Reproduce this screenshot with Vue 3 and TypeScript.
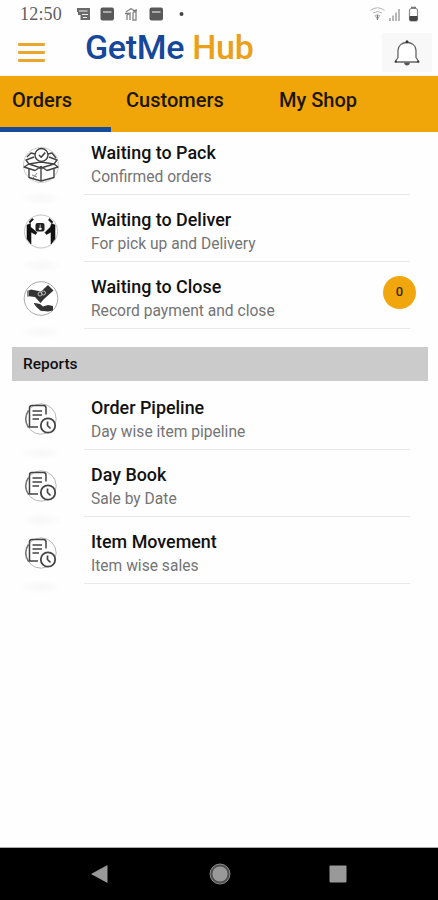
<script setup lang="ts">
import { ref } from 'vue'

interface MenuItem {
  title: string
  subtitle: string
  icon: 'pack' | 'deliver' | 'close' | 'report'
  badge?: number
}

const tabs = ['Orders', 'Customers', 'My Shop']
const activeTab = ref('Orders')

const sections: { id: string; heading?: string; items: MenuItem[] }[] = [
  {
    id: 'orders',
    items: [
      { title: 'Waiting to Pack', subtitle: 'Confirmed orders', icon: 'pack' },
      { title: 'Waiting to Deliver', subtitle: 'For pick up and Delivery', icon: 'deliver' },
      { title: 'Waiting to Close', subtitle: 'Record payment and close', icon: 'close', badge: 0 },
    ],
  },
  {
    id: 'reports',
    heading: 'Reports',
    items: [
      { title: 'Order Pipeline', subtitle: 'Day wise item pipeline', icon: 'report' },
      { title: 'Day Book', subtitle: 'Sale by Date', icon: 'report' },
      { title: 'Item Movement', subtitle: 'Item wise sales', icon: 'report' },
    ],
  },
]
</script>

<template>
  <div class="screen">
    <div class="status">
      <span class="time">12:50</span>
      <svg class="notices" width="112" height="16" viewBox="0 0 112 16">
        <path d="M1 2h13v12H4.500V9H2V6H1z" fill="#6a6a6a" />
        <path d="M3 5h8.500M6 8.500h6M7 11.500h4" stroke="#eee" stroke-width="1.200" />
        <rect x="24.500" y="1.500" width="13.500" height="13" rx="2" fill="#595959" />
        <path d="M27 6h8.500" stroke="#aaa" stroke-width="2" />
        <path d="M50 6l5-3.500L60 6M51 14V9l3-2v7m3 0V7l3-2v9z" fill="none" stroke="#8a8a8a" stroke-width="1.400" />
        <path d="M49 7.500h4M57 5l4-1" stroke="#777" stroke-width="1.500" />
        <rect x="73.500" y="1.500" width="13.500" height="13" rx="2" fill="#595959" />
        <path d="M76 6h8.500" stroke="#aaa" stroke-width="2" />
        <circle cx="105.500" cy="8" r="2" fill="#444" />
      </svg>
      <svg class="signals" width="52" height="18" viewBox="0 0 52 18">
        <path d="M1.500 5.500Q8.500 0 15.500 5.500M4 8q4.500-3 9 0M6 10.500q2.500-1.500 5 0L8.500 14z" fill="none" stroke="#b4b4b4" stroke-width="1" />
        <path d="M8.500 10v5" stroke="#777" stroke-width="1.200" />
        <path d="M21 13v3M24 10.500V16M27 7.500V16M30 4v12" stroke="#b8b8b8" stroke-width="2" />
        <rect x="40.500" y="3.500" width="8" height="12.500" rx="2" fill="#fff" stroke="#888" stroke-width="1.200" />
        <path d="M42 2.500h5" stroke="#777" stroke-width="1.500" />
        <path d="M40.500 11h8v3.500L47 16h-5l-1.500-1.500z" fill="#444" />
      </svg>
    </div>

    <header class="header">
      <button class="menu" aria-label="Menu"><i></i><i></i><i></i></button>
      <h1 class="brand"><span class="brand-main">GetMe</span> <span class="brand-sub">Hub</span></h1>
      <button class="bell" aria-label="Notifications">
        <svg width="30" height="30" viewBox="0 0 30 30">
          <path d="M3 24l3-4.500V12.500C6 7.500 10 4.500 15 4.500s9 3 9 8v7l3 4.500z" fill="#fff" stroke="#666" stroke-width="1.300" stroke-linejoin="round" />
          <circle cx="15" cy="3.800" r="1.500" fill="#333" />
          <path d="M12 24.500h6q-.5 3-3 3t-3-3" fill="#555" />
          <circle cx="4" cy="23.500" r="1" fill="#333" />
          <circle cx="26" cy="23.500" r="1" fill="#333" />
        </svg>
      </button>
    </header>

    <nav class="tabs">
      <button
        v-for="tab in tabs"
        :key="tab"
        class="tab"
        :class="{ active: tab === activeTab }"
        @click="activeTab = tab"
      >{{ tab }}</button>
    </nav>

    <main class="content">
      <section v-for="section in sections" :key="section.id" class="section">
        <h2 v-if="section.heading" class="heading">{{ section.heading }}</h2>
        <ul class="list">
          <li v-for="item in section.items" :key="item.title" class="row">
            <div class="icon-cell">
              <svg v-if="item.icon === 'pack'" width="38" height="38" viewBox="0 0 38 38" fill="none" stroke="#444" stroke-width="1.400" stroke-linejoin="round">
                <circle cx="19" cy="19" r="17.500" stroke="#ccc" stroke-width="1" />
                <path d="M7 19v12.500l12 3.500 13-3.500V19M19 20v15" />
                <path d="M7 18l12-2 13 2-13 4zM7 18l-5 3 11 3.500 6-4 6 4 11-3.500-4-3M7 18l-3-4 8-3M32 18l3-4-8-3" fill="#fff" />
                <path d="M5 11l4-4 4 1M26 8l4-1 4 5" />
                <circle cx="19.500" cy="9" r="6.500" fill="#fff" />
                <path d="M17 9l2.200 2.200 4-4.700" stroke-width="1.600" />
                <path d="M10 29l5 2M11 32l4-5" stroke="#888" stroke-width="1" />
              </svg>
              <svg v-else-if="item.icon === 'deliver'" width="38" height="38" viewBox="0 0 38 38">
                <circle cx="19" cy="18.500" r="16.500" fill="#fff" stroke="#c4c4c4" />
                <path d="M5 12l3.500-1.500V14l6.500 5.500-1.500 2L9 19v12l-4-5zM33 12l-3.500-1.500L28.500 14 23 19.500l1.500 2 4.500-2.500v12l4-5zM7 9l3-3.500 1.500 1-3.500 3.500zM27.500 5.500l3.500 3.500-1.500 1-3-3z" fill="#111" stroke="#111" stroke-width=".6" />
                <rect x="13.500" y="10" width="9" height="8.500" rx="2" fill="#222" />
                <path d="M18.200 11.500v3m-1 .500h2v1.500h-2z" fill="#fff" stroke="#fff" stroke-width=".7" />
              </svg>
              <svg v-else-if="item.icon === 'close'" width="38" height="38" viewBox="0 0 38 38">
                <circle cx="19" cy="18.500" r="16.800" fill="#fff" stroke="#aaa" />
                <path d="M5 11.500l4-2 10 2 7-6.500 5.500 5.500L22 19l-3.500 4-5.500-6-8-1z" fill="#333" />
                <circle cx="18" cy="14" r="2" fill="none" stroke="#bbb" />
                <circle cx="21.500" cy="13" r="2" fill="none" stroke="#bbb" />
                <path d="M6 10.500v6" stroke="#888" stroke-width="2" />
                <path d="M13 23l5 1 3 2.500 5-1.500 5 1v4.500l-5 1-8-1z" fill="#333" />
                <path d="M12.500 23q3 6 9 7.500" fill="none" stroke="#333" stroke-width="1.500" />
              </svg>
              <svg v-else width="38" height="38" viewBox="0 0 38 38" fill="none" stroke="#444" stroke-width="1.500">
                <circle cx="19" cy="19" r="15.200" fill="#fff" stroke="#b8b8b8" stroke-width="1" />
                <path d="M6.500 27.500Q.8 19 6.500 10.500" stroke="#777" />
                <path d="M7.500 26.500V8q0-2.500 2.500-2.500h11.500q2.500 0 2.500 2.500v6.500M6.500 27H16" />
                <path d="M10.500 11h9.500M10.500 15h9.500M10.500 19h6.500" />
                <circle cx="26" cy="25.500" r="7.200" fill="#fff" stroke-width="1.800" />
                <path d="M25.500 21.500v4l3 3" stroke-width="1.700" />
              </svg>
            </div>
            <div class="details">
              <div class="title">{{ item.title }}</div>
              <div class="subtitle">{{ item.subtitle }}</div>
              <span v-if="item.badge !== undefined" class="badge">{{ item.badge }}</span>
            </div>
          </li>
        </ul>
      </section>
    </main>

    <footer class="system-nav">
      <svg width="20" height="22" viewBox="0 0 20 22"><path d="M1 11L17.500 2v18z" fill="#999" /></svg>
      <svg width="22" height="22" viewBox="0 0 22 22"><circle cx="11" cy="11" r="10" fill="#555" stroke="#888" /><circle cx="11" cy="11" r="8" fill="#999" stroke="#333" stroke-width=".6" /></svg>
      <svg width="18" height="18" viewBox="0 0 18 18"><rect x=".5" y=".5" width="17" height="17" rx="1" fill="#999" /></svg>
    </footer>
  </div>
</template>

<style>
body {
  margin: 0;
  background: #fff;
}
</style>

<style scoped>
.screen {
  display: flex;
  flex-direction: column;
  width: 438px;
  height: 900px;
  overflow: hidden;
  background: #fefefe;
  font-family: Roboto, "Liberation Sans", sans-serif;
  color: #111;
}

button {
  border: 0;
  padding: 0;
  background: none;
  font: inherit;
  color: inherit;
}

.status {
  display: flex;
  align-items: center;
  height: 28px;
  padding: 0 17px 0 20px;
}

.time {
  width: 56px;
  font: 18px/28px "Liberation Serif", serif;
  letter-spacing: 0.2px;
  color: #606060;
}

.signals {
  margin-left: auto;
}

.header {
  display: flex;
  align-items: flex-start;
  height: 48px;
  box-sizing: border-box;
  border-bottom: 1px solid #fdf6ea;
}

.menu {
  display: flex;
  flex-direction: column;
  gap: 5px;
  width: 27px;
  margin: 15px 0 0 18px;
}

.menu i {
  height: 3px;
  border-radius: 1px;
  background: #eba52c;
}

.brand {
  margin: 0 0 0 40px;
  font-size: 34px;
  line-height: 38px;
  font-weight: 500;
  letter-spacing: -0.3px;
  white-space: nowrap;
}

.brand-main {
  color: #15489b;
}

.brand-sub {
  color: #eba01a;
}

.bell {
  display: flex;
  align-items: center;
  justify-content: center;
  width: 50px;
  height: 39px;
  margin: 5px 6px 0 auto;
  background: #f8f8f8;
}

.tabs {
  display: flex;
  height: 56px;
  background: #f0a608;
}

.tab {
  box-sizing: border-box;
  padding: 0 0 3px 15px;
  border-bottom: 5px solid transparent;
  font-size: 20px;
  font-weight: 500;
  text-align: left;
  color: #1c1608;
}

.tab:nth-child(1) {
  width: 111px;
  padding-left: 12px;
}

.tab:nth-child(2) {
  width: 153px;
}

.tab.active {
  border-color: #164b9c;
}

.content {
  flex: 1;
}

.heading {
  height: 34px;
  margin: 18px 10px 2px 12px;
  padding-left: 11px;
  background: #cbcbcb;
  font-size: 15.500px;
  line-height: 34px;
  font-weight: 500;
}

.list {
  margin: 0;
  padding: 0;
  list-style: none;
}

.row {
  display: flex;
  align-items: flex-end;
  height: 67px;
}

.section:first-child .row:first-child {
  height: 63px;
}

.icon-cell {
  position: relative;
  display: flex;
  justify-content: center;
  width: 82px;
  margin-right: 2px;
  padding-bottom: 11px;
}

.icon-cell::after {
  content: "";
  position: absolute;
  left: 20px;
  bottom: -10px;
  width: 42px;
  height: 14px;
  background: radial-gradient(closest-side, #f7f7f7, transparent);
}

.section:last-child .icon-cell {
  padding-bottom: 12px;
}

.details {
  position: relative;
  width: 326px;
  box-sizing: border-box;
  padding: 0 0 5px 7px;
  border-bottom: 1px solid #e8e8e8;
}

.title,
.subtitle {
  line-height: 24px;
  white-space: nowrap;
}

.title {
  font-size: 17.900px;
  font-weight: 500;
}

.subtitle {
  font-size: 15.600px;
  color: #747474;
}

.badge {
  position: absolute;
  top: 1px;
  right: -6px;
  width: 33px;
  height: 33px;
  border-radius: 50%;
  background: #f0a60c;
  font-size: 13px;
  line-height: 31px;
  font-weight: 500;
  text-align: center;
  color: #3a2a08;
}

.system-nav {
  display: flex;
  align-items: center;
  justify-content: space-between;
  box-sizing: border-box;
  height: 53px;
  padding: 0 91px 0 90px;
  border-top: 1px solid #aaa;
  background: #000;
}
</style>
